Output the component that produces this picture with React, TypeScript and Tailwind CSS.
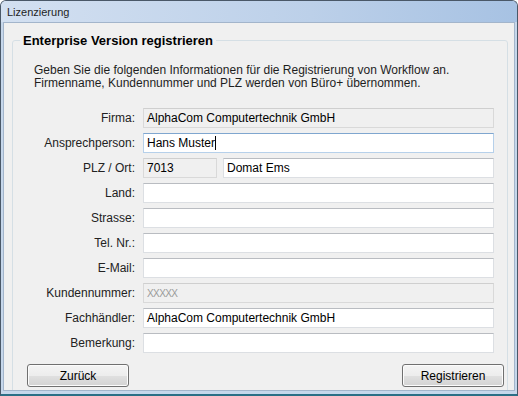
import React from "react";

const FIELDS = [
  { label: "Firma:", value: "AlphaCom Computertechnik GmbH", kind: "readonly" },
  { label: "Ansprechperson:", value: "Hans Muster", kind: "focus" },
  { label: "PLZ / Ort:", value: "", kind: "plz" },
  { label: "Land:", value: "", kind: "normal" },
  { label: "Strasse:", value: "", kind: "normal" },
  { label: "Tel. Nr.:", value: "", kind: "normal" },
  { label: "E-Mail:", value: "", kind: "normal" },
  { label: "Kundennummer:", value: "XXXXX", kind: "muted" },
  { label: "Fachhändler:", value: "AlphaCom Computertechnik GmbH", kind: "normal" },
  { label: "Bemerkung:", value: "", kind: "normal" },
];

function Box({ kind, children, className = "" }: { kind: string; children?: React.ReactNode; className?: string }) {
  const look =
    kind === "readonly" || kind === "muted"
      ? "bg-[#f0f0f0] border-[#d9d9d9] border-t-[#cfcfcf]"
      : kind === "focus"
      ? "bg-white border-[#b6d0ea] border-t-[#7fa6cf]"
      : "bg-white border-[#dcdfe3] border-t-[#b9bcc1]";
  return (
    <div className={`h-[20px] border ${look} flex items-center px-[3px] ${className}`}>
      {children}
    </div>
  );
}

function Row({ label, value, kind }: { label: string; value: string; kind: string }) {
  return (
    <div className="flex items-center h-[20px]">
      <div className="w-[123px] pr-[1px] text-right text-[#222]">{label}</div>
      <div className="ml-[7px] flex-1 flex gap-[6px]">
        {kind === "plz" ? (
          <>
            <Box kind="readonly" className="w-[74px]">7013</Box>
            <Box kind="normal" className="flex-1">Domat Ems</Box>
          </>
        ) : (
          <Box kind={kind} className="flex-1">
            {kind === "muted" ? (
              <span className="text-[10px] text-[#9a9a9a] tracking-[-0.6px]">{value}</span>
            ) : (
              <span>{value}</span>
            )}
            {kind === "focus" && <span className="w-px h-[14px] bg-black" />}
          </Box>
        )}
      </div>
    </div>
  );
}

function WinButton({ children }: { children: React.ReactNode }) {
  return (
    <button className="w-[102px] h-[23px] rounded-[3px] border border-[#707070] bg-[linear-gradient(#f4f4f4_0%,#ededed_50%,#e0e0e0_51%,#d3d3d3_100%)] text-[12px] text-black shadow-[inset_0_0_0_1px_#fcfcfc]">
      {children}
    </button>
  );
}

export default function App() {
  return (
    <div className="w-[518px] h-[396px] font-['Liberation_Sans',Arial,sans-serif] text-[12px] text-black">
      <div className="w-full h-full flex flex-col rounded-t-[6px] border border-[#4a5868] border-b-[#2b6f86] border-b-2 bg-[#c6d7eb] overflow-hidden">
        {/* Title bar */}
        <div className="h-[21px] shrink-0 pl-[6px] pt-[5px] text-[11px] leading-[13px] text-[#1e1e1e] bg-[linear-gradient(to_right,#d3e0f1,#bcd0e9_60%,#a7c2e3)]">
          Lizenzierung
        </div>

        {/* Client area */}
        <div className="flex-1 mx-[2px] border border-[#a3b5cb] bg-[#f0f0f0] overflow-hidden pl-[8px] pr-[6px] pt-[10px]">
          <fieldset className="border border-[#d5dfe5] rounded-[3px] h-[400px] pl-[21px] pr-[13px]">
            <legend className="ml-[-14px] px-[3px] text-[13px] font-bold leading-[15px] text-black">
              Enterprise Version registrieren
            </legend>

            <div className="mt-[16px] leading-[13px] text-[#1e1e1e]">
              <p>Geben Sie die folgenden Informationen für die Registrierung von Workflow an.</p>
              <p>Firmenname, Kundennummer und PLZ werden von Büro+ übernommen.</p>
            </div>

            <div className="-ml-[21px] mt-[18px] flex flex-col gap-[5px]">
              {FIELDS.map((f) => (
                <Row key={f.label} label={f.label} value={f.value} kind={f.kind} />
              ))}
            </div>

            <div className="-ml-[7px] -mr-[10px] mt-[11px] flex justify-between">
              <WinButton>Zurück</WinButton>
              <WinButton>Registrieren</WinButton>
            </div>
          </fieldset>
        </div>
        <div className="h-[3px] shrink-0" />
      </div>
    </div>
  );
}
